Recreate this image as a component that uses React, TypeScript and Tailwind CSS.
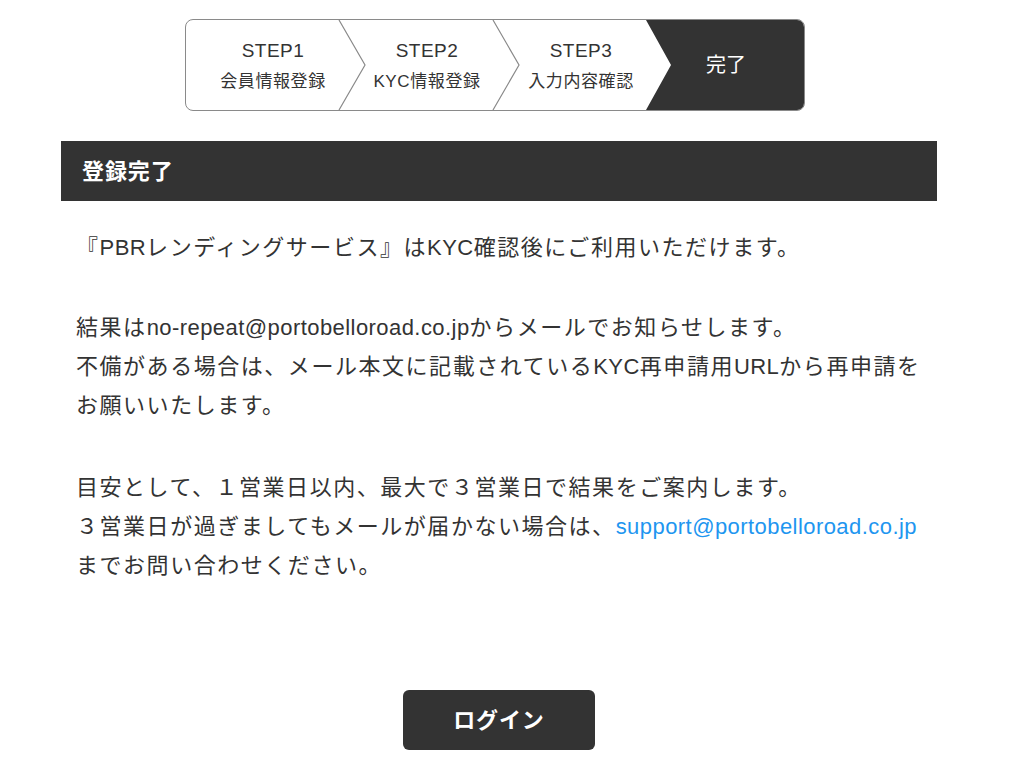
import React from 'react';

const font = "font-['Liberation_Sans','Noto_Sans_CJK_JP',sans-serif]";

const steps = [
  { title: 'STEP1', label: '会員情報登録' },
  { title: 'STEP2', label: 'KYC情報登録' },
  { title: 'STEP3', label: '入力内容確認' },
];

// latin runs are set tighter than the kana/kanji around them
const L: React.FC<{ children: React.ReactNode }> = ({ children }) => (
  <span className="tracking-[0.02em]">{children}</span>
);

const Stepper: React.FC = () => (
  <div className="relative flex h-[92px] w-[620px] overflow-hidden rounded-lg border border-[#8a8a8a] bg-white">
    {steps.map((s) => (
      <div key={s.title} className="flex w-[154px] flex-col items-center justify-center pl-5 text-[#333]">
        <div className="text-[19px] leading-[26px] tracking-[0.5px]">{s.title}</div>
        <div className="mt-[7px] text-[17px] leading-[22px] tracking-[0.6px]">{s.label}</div>
      </div>
    ))}
    {/* last step, dark with notch */}
    <div className="absolute inset-y-0 left-[460px] right-0 bg-[#333] [clip-path:polygon(0_0,100%_0,100%_100%,0_100%,25px_50%)]" />
    <div className="relative flex flex-1 items-center justify-center text-[20px] text-white">完了</div>
    <svg className="pointer-events-none absolute inset-0" width="618" height="90" viewBox="0 0 618 90">
      <polyline points="153,0 179,45 153,90" fill="none" stroke="#8a8a8a" strokeWidth="1.2" />
      <polyline points="307,0 333,45 307,90" fill="none" stroke="#8a8a8a" strokeWidth="1.2" />
    </svg>
  </div>
);

export default function App() {
  return (
    <div className={`${font} min-h-[777px] bg-white text-[#333]`}>
      <div className="ml-[61px] w-[876px] pt-[19px]">
        <div className="ml-[124px]">
          <Stepper />
        </div>

        <div className="mt-[30px] flex h-[60px] items-center bg-[#333] pl-[21px]">
          <h2 className="text-[22px] font-bold tracking-[0.04em] text-white">登録完了</h2>
        </div>

        <div className="pl-[15px] pt-[27px] text-[22px] leading-[39px] tracking-[1.54px]">
          <p>
            『<L>PBR</L>レンディングサービス』は<L>KYC</L>確認後にご利用いただけます。
          </p>
          <p className="mt-[41px]">
            結果は<L>no-repeat@portobelloroad.co.jp</L>からメールでお知らせします。
            <br />
            不備がある場合は、メール本文に記載されている<L>KYC</L>再申請用<L>URL</L>から再申請を
            <br />
            お願いいたします。
          </p>
          <p className="mt-[43px]">
            目安として、１営業日以内、最大で３営業日で結果をご案内します。
            <br />
            ３営業日が過ぎましてもメールが届かない場合は、
            <a href="#" className="tracking-[0.02em] text-[#1e96f0]">support@portobelloroad.co.jp</a>
            <br />
            までお問い合わせください。
          </p>
        </div>

        <div className="mt-[105px] flex justify-center pb-[27px]">
          <button className="h-[60px] w-[192px] rounded-md bg-[#333] text-[22px] font-bold tracking-[0.04em] text-white">
            ログイン
          </button>
        </div>
      </div>
    </div>
  );
}
